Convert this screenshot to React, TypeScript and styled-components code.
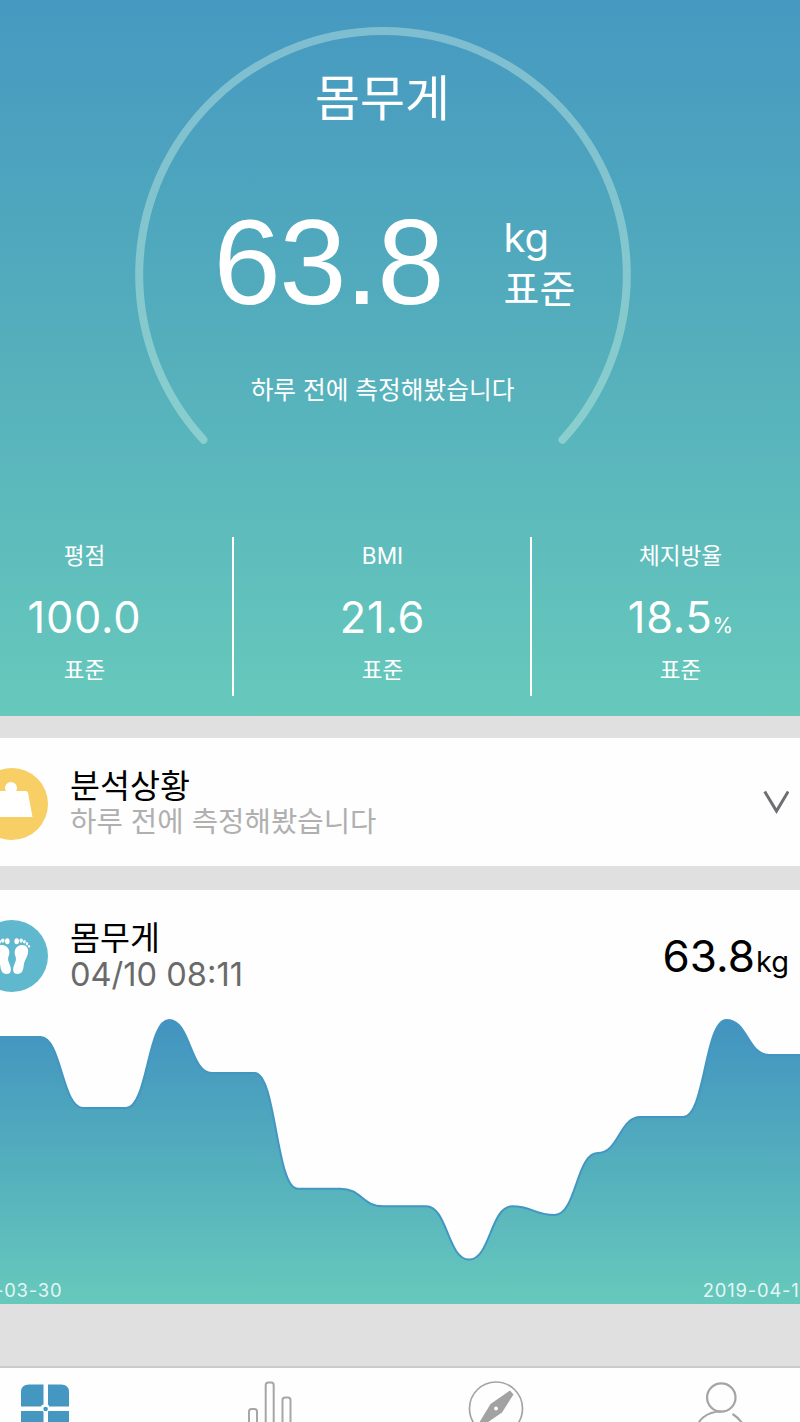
import React from "react";
import styled, { createGlobalStyle } from "styled-components";

const Global = createGlobalStyle`
  body { margin: 0; background: #e0e0e0; }
  * { box-sizing: border-box; }
`;

const Viewport = styled.div`
  width: 800px;
  height: 1422px;
  overflow: hidden;
  background: #e0e0e0;
  font-family: Inter, "Noto Sans CJK KR", sans-serif;
`;

const Screen = styled.div`
  width: 894px;
  margin-left: -64px;
  display: flex;
  flex-direction: column;
`;

const Hero = styled.section`
  height: 716px;
  padding-top: 27px;
  color: #fff;
  background: linear-gradient(#4699c1, #53adbc 45%, #67c9bc);
  display: flex;
  flex-direction: column;
  align-items: center;
`;

const Gauge = styled.div`
  position: relative;
  width: 496px;
  height: 510px;
  margin-right: 1px;
  display: flex;
  flex-direction: column;
  align-items: center;
`;

const Ring = styled.svg`
  position: absolute;
  top: 0;
  left: 0;
  overflow: visible;
`;

const GaugeTitle = styled.h1`
  margin: 37px 0 0;
  font-size: 49px;
  font-weight: 400;
  line-height: 70px;
`;

const Reading = styled.div`
  align-self: stretch;
  display: flex;
  margin-top: 58px;
  padding-left: 79px;
  height: 140px;
`;

const BigNumber = styled.div`
  width: 290px;
  font-family: "Liberation Sans", sans-serif;
  font-size: 121px;
  line-height: 140px;
  letter-spacing: -1.5px;
`;

const Units = styled.div`
  display: flex;
  flex-direction: column;
  padding-top: 21px;
`;

const Unit = styled.span`
  font-size: 40px;
  line-height: 50px;
`;

const Status = styled.span`
  font-size: 39px;
  line-height: 52px;
`;

const Measured = styled.p`
  margin: 38px 0 0;
  font-size: 24.7px;
  line-height: 40px;
  white-space: nowrap;
`;

const Stats = styled.div`
  align-self: stretch;
  display: grid;
  grid-template-columns: repeat(3, 298px);
  height: 159px;
`;

const Stat = styled.div<{ $divided?: boolean }>`
  display: flex;
  flex-direction: column;
  align-items: center;
  padding-left: 1px;
  border-right: 2px solid ${(p) => (p.$divided ? "#fff" : "transparent")};
`;

const StatLabel = styled.span`
  font-size: 22.6px;
  line-height: 37px;
`;

const StatValue = styled.span`
  height: 52px;
  margin-top: 17px;
  font-size: 43.3px;
  line-height: 52px;
  letter-spacing: 0.8px;
`;

const Percent = styled.small`
  font-size: 21px;
  line-height: 1;
  letter-spacing: 0;
`;

const StatNote = styled.span`
  margin-top: 9px;
  font-size: 22.5px;
  line-height: 36px;
`;

const Card = styled.section<{ $top: number; $height: number }>`
  margin-top: ${(p) => p.$top}px;
  height: ${(p) => p.$height}px;
  background: #fefefe;
`;

const CardHeader = styled.header`
  display: flex;
  align-items: flex-start;
  height: 128px;
  padding: 30px 41px 0 40px;
`;

const CardText = styled.div`
  flex: 1;
  margin-left: 22px;
  display: flex;
  flex-direction: column;
`;

const CardTitle = styled.h2`
  margin: 0;
  font-size: 32.6px;
  font-weight: 400;
  line-height: 36px;
  color: #000;
`;

const CardSub = styled.span<{ $dark?: boolean }>`
  font-size: ${(p) => (p.$dark ? 32.6 : 28.7)}px;
  line-height: 36px;
  color: ${(p) => (p.$dark ? "#6a6a6a" : "#b0b0b0")};
`;

const Chevron = styled.svg`
  margin-top: 22px;
`;

const CardValue = styled.div`
  font-size: 44px;
  line-height: 54px;
  margin-top: 9px;
  color: #000;
`;

const CardUnit = styled.small`
  margin-left: 1px;
  font-size: 29px;
`;

const ChartBox = styled.div`
  height: 286px;
  display: grid;
`;

const ChartSvg = styled.svg`
  grid-area: 1 / 1;
  display: block;
`;

const Dates = styled.div`
  grid-area: 1 / 1;
  align-self: end;
  display: flex;
  justify-content: space-between;
  padding: 0 18px 2px 14px;
  font-size: 18.4px;
  line-height: 24px;
  letter-spacing: 0.8px;
  color: #e4f6f4;
`;

const TabBar = styled.nav`
  width: 902px;
  height: 56px;
  margin: 62px 0 0 -4px;
  border-top: 2px solid #cbcbcb;
  background: #fefefe;
  display: grid;
  grid-template-columns: repeat(4, 225.5px);
  justify-items: center;
`;

const Tab = styled.a`
  padding-top: 12px;
  display: block;
`;

const LEVELS = [
  1037, 1037, 1037, 1108, 1108, 1020, 1073, 1073, 1188.7, 1188.7, 1206.3, 1206.3,
  1259.5, 1206.3, 1215, 1153, 1117, 1117, 1020, 1055, 1055, 1055,
];
const STEP = 42.87;
const START = 18.6;

function curve() {
  let d = "";
  LEVELS.forEach((level, i) => {
    const x = START + i * STEP;
    const y = level - 1018;
    if (i === 0) {
      d = `M-10 ${y}L${x} ${y}`;
      return;
    }
    const mid = x - STEP / 2;
    d += `C${mid} ${LEVELS[i - 1] - 1018} ${mid} ${y} ${x} ${y}`;
  });
  return d;
}

function Chart() {
  const line = curve();
  return (
    <ChartSvg width="894" height="286" viewBox="0 0 894 286">
      <defs>
        <linearGradient id="area" x1="0" y1="0" x2="0" y2="286" gradientUnits="userSpaceOnUse">
          <stop offset="0" stopColor="#4293c0" />
          <stop offset="0.5" stopColor="#53aebd" />
          <stop offset="1" stopColor="#67c9bc" />
        </linearGradient>
      </defs>
      <path d={`${line}V286H-10Z`} fill="url(#area)" />
      <path d={line} fill="none" stroke="#4296c1" strokeWidth="2" />
    </ChartSvg>
  );
}

function WeightIcon() {
  return (
    <svg width="72" height="72" viewBox="0 0 72 72">
      <circle cx="36" cy="36" r="36" fill="#f8cf64" />
      <circle cx="35" cy="20" r="6" fill="#fff" />
      <path d="M20 23H50Q51.500 23 52 25L56.500 49H13.500L18 25Q18.500 23 20 23Z" fill="#fff" />
    </svg>
  );
}

function Foot() {
  return (
    <g>
      <path d="M45.500 25C50 24.500 53 28 52 33C51 38 48.500 40 47.800 45C47.300 50 46 54 41.500 54C37.500 54 36.500 51 37.500 47C38.500 43 41 40.500 39.500 36.500C37.500 31.500 39 26 45.500 25Z" />
      <ellipse cx="40.700" cy="21.200" rx="2.300" ry="3" />
      <ellipse cx="45.200" cy="20.600" rx="1.700" ry="2.100" />
      <ellipse cx="48.400" cy="21.700" rx="1.400" ry="1.800" />
      <ellipse cx="51" cy="23.700" rx="1.200" ry="1.600" />
      <ellipse cx="53" cy="26.300" rx="1.100" ry="1.400" />
    </g>
  );
}

function FeetIcon() {
  return (
    <svg width="72" height="72" viewBox="0 0 72 72">
      <circle cx="36" cy="36" r="36" fill="#60b8cf" />
      <g fill="#fff">
        <Foot />
        <g transform="translate(72 0) scale(-1 1)">
          <Foot />
        </g>
      </g>
    </svg>
  );
}

export default function App() {
  return (
    <Viewport>
      <Global />
      <Screen>
        <Hero>
          <Gauge>
            <Ring width="496" height="496" viewBox="0 0 496 496">
              <path
                d="M68.500 412.800A243.800 243.800 0 1 1 427.500 412.800"
                fill="none"
                stroke="#e6ffef"
                strokeOpacity="0.35"
                strokeWidth="8"
                strokeLinecap="round"
              />
            </Ring>
            <GaugeTitle>몸무게</GaugeTitle>
            <Reading>
              <BigNumber>63.8</BigNumber>
              <Units>
                <Unit>kg</Unit>
                <Status>표준</Status>
              </Units>
            </Reading>
            <Measured>하루 전에 측정해봤습니다</Measured>
          </Gauge>
          <Stats>
            <Stat $divided>
              <StatLabel>평점</StatLabel>
              <StatValue>100.0</StatValue>
              <StatNote>표준</StatNote>
            </Stat>
            <Stat $divided>
              <StatLabel>BMI</StatLabel>
              <StatValue>21.6</StatValue>
              <StatNote>표준</StatNote>
            </Stat>
            <Stat>
              <StatLabel>체지방율</StatLabel>
              <StatValue>
                18.5<Percent>%</Percent>
              </StatValue>
              <StatNote>표준</StatNote>
            </Stat>
          </Stats>
        </Hero>

        <Card $top={22} $height={128}>
          <CardHeader>
            <WeightIcon />
            <CardText>
              <CardTitle>분석상황</CardTitle>
              <CardSub>하루 전에 측정해봤습니다</CardSub>
            </CardText>
            <Chevron width="26" height="24" viewBox="0 0 26 24">
              <path d="M1.700 1.500L13.500 21L25.200 1.500" fill="none" stroke="#6e6f72" strokeWidth="3" />
            </Chevron>
          </CardHeader>
        </Card>

        <Card $top={24} $height={414}>
          <CardHeader>
            <FeetIcon />
            <CardText>
              <CardTitle>몸무게</CardTitle>
              <CardSub $dark>04/10 08:11</CardSub>
            </CardText>
            <CardValue>
              63.8<CardUnit>kg</CardUnit>
            </CardValue>
          </CardHeader>
          <ChartBox>
            <Chart />
            <Dates>
              <span>2019-03-30</span>
              <span>2019-04-10</span>
            </Dates>
          </ChartBox>
        </Card>

        <TabBar>
          <Tab>
            <svg width="56" height="56" viewBox="0 0 56 56">
              <path
                d="M12 4.500H26.500V24.500Q24 25 24 26.500H4V12Q4 4.500 12 4.500ZM31 4.500H44Q52 4.500 52 12V26.500H32Q32 25 31 24.500ZM4 31H26.500V52H4ZM31 31H52V52H31Z"
                fill="#4397c0"
              />
              <circle cx="28.600" cy="29" r="3.400" fill="#fff" />
              <circle cx="28.600" cy="29" r="2.300" fill="#4397c0" />
            </svg>
          </Tab>
          <Tab>
            <svg width="56" height="56" viewBox="0 0 56 56" fill="none" stroke="#a6a6a6" strokeWidth="2">
              <rect x="7" y="29" width="8" height="34" rx="2.500" />
              <rect x="23.700" y="2.500" width="8" height="60" rx="2.500" />
              <rect x="40.500" y="17.500" width="8" height="45" rx="2.500" />
            </svg>
          </Tab>
          <Tab>
            <svg width="56" height="56" viewBox="0 0 56 56">
              <circle cx="28" cy="28.500" r="26.500" fill="none" stroke="#a4a4a4" strokeWidth="1.700" />
              <path d="M42 10.500L45.500 14.500L34 32.500L13 47L11 43L22.500 24Z" fill="#a2a2a2" />
              <circle cx="28" cy="28.500" r="1.900" fill="#fff" />
            </svg>
          </Tab>
          <Tab>
            <svg width="56" height="56" viewBox="0 0 56 56" fill="none" stroke="#a4a4a4" strokeWidth="2.200">
              <circle cx="28.300" cy="17.500" r="14.200" />
              <path d="M3.300 52C3.300 40 14 31.500 28 31.500M39.500 34C46 38 51 44 53 52" />
            </svg>
          </Tab>
        </TabBar>
      </Screen>
    </Viewport>
  );
}
